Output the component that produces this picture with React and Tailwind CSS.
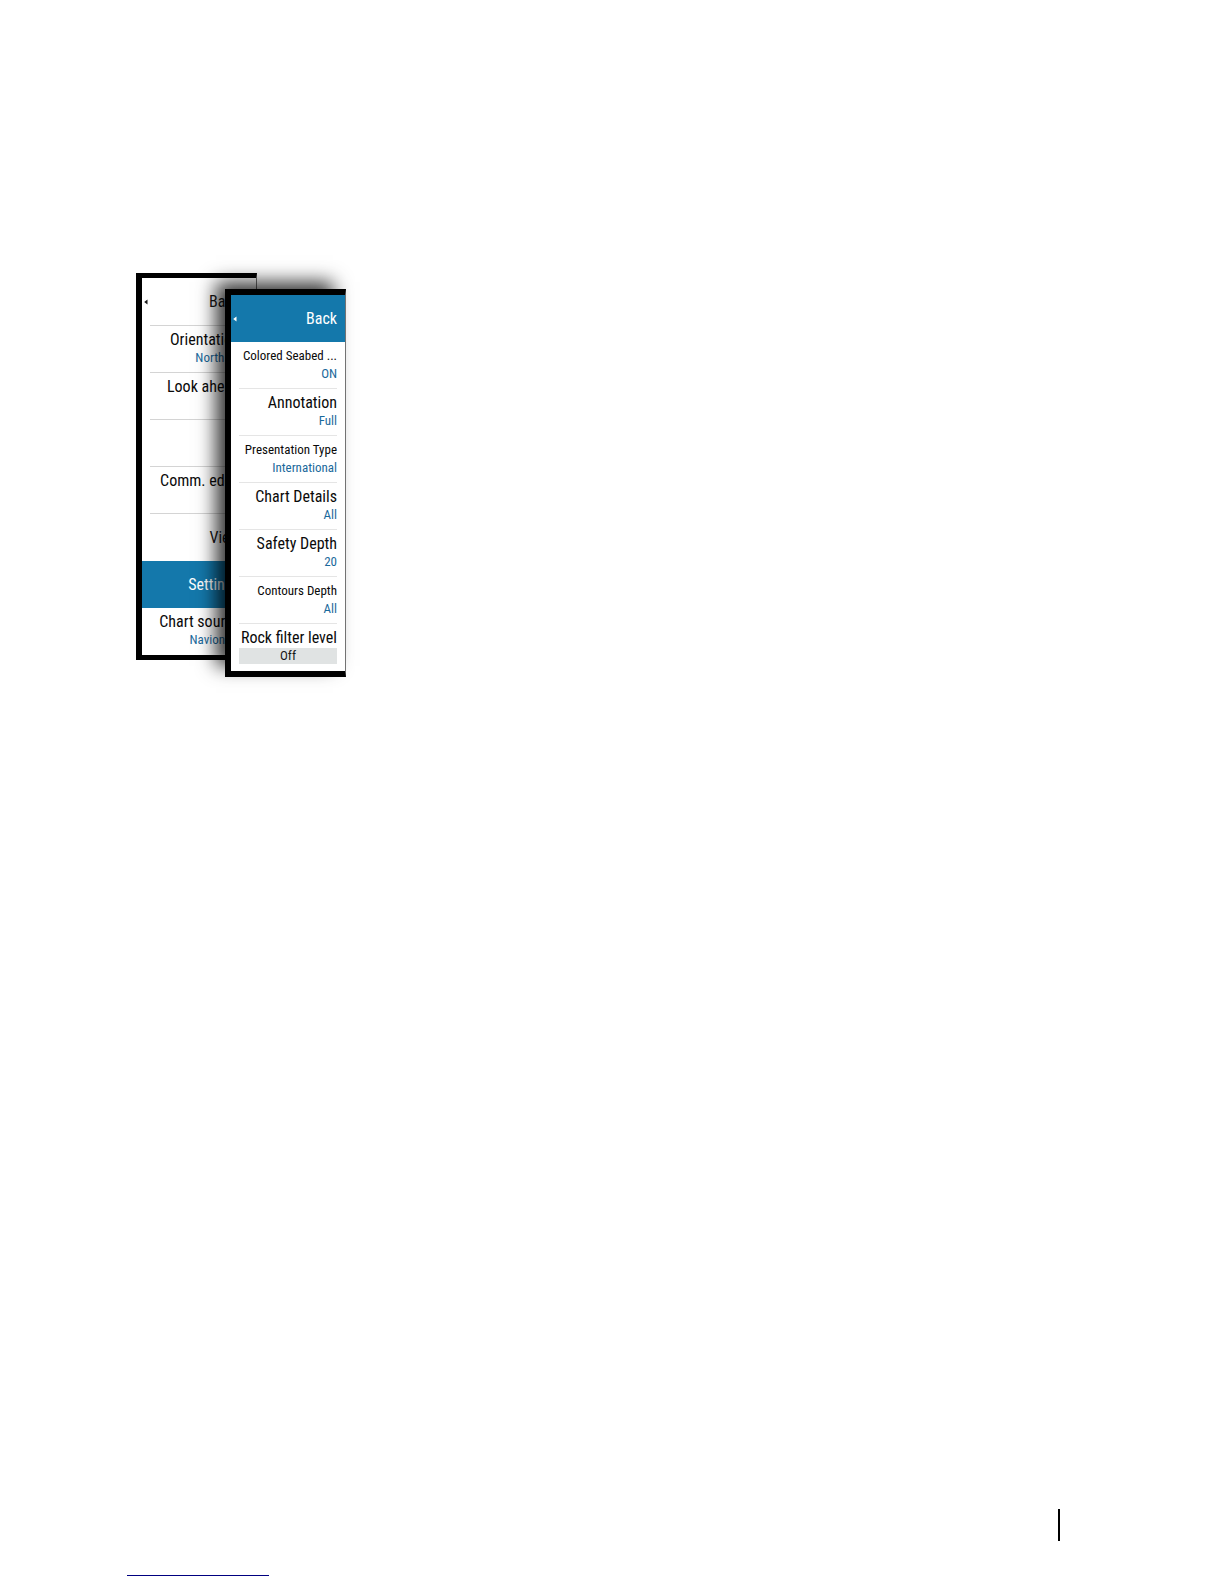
const backItems = [
  { label: 'Orientation', value: 'North up' },
  { label: 'Look ahead', value: '' },
  { label: '3D', narrow: true },
  { label: 'Comm. edge', value: '' },
  { label: 'View' },
  { label: 'Settings', active: true },
  { label: 'Chart source', value: 'Navionics' },
]

const frontItems = [
  { label: 'Colored Seabed ...', value: 'ON', narrow: true },
  { label: 'Annotation', value: 'Full' },
  { label: 'Presentation Type', value: 'International', narrow: true },
  { label: 'Chart Details', value: 'All' },
  { label: 'Safety Depth', value: '20' },
  { label: 'Contours Depth', value: 'All', narrow: true },
  { label: 'Rock filter level', value: 'Off', field: true },
]

function BackButton({ active }) {
  return (
    <button
      type="button"
      className={`flex w-full items-center justify-between pl-0.5 text-base ${
        active ? 'h-[47px] bg-[#1478ab] pr-2 text-white' : 'h-12 pr-4 text-neutral-900'
      }`}
    >
      <svg width="4" height="6" viewBox="0 0 4 6" fill="currentColor" aria-hidden="true">
        <path d="M0.2 3 L3.5 0.6 V5.4 Z" />
      </svg>
      Back
    </button>
  )
}

function MenuItem({ item, inset }) {
  const padding = inset ? 'pr-4' : 'pr-2'
  const size = item.narrow ? 'text-[13px] leading-5' : 'text-base leading-5'

  // Entries without a value line centre their label in the row
  if (item.value === undefined) {
    return (
      <button
        type="button"
        className={`flex h-[47px] w-full items-center justify-end ${size} ${padding} ${
          item.active ? 'bg-[#1478ab] text-white' : 'text-neutral-900'
        }`}
      >
        {item.label}
      </button>
    )
  }

  return (
    <button
      type="button"
      className={`flex h-[47px] w-full flex-col items-end pt-1 text-right ${padding}`}
    >
      <span className={`whitespace-nowrap text-neutral-950 ${size}`}>{item.label}</span>
      {item.field ? (
        <span className="ml-2 self-stretch bg-[#e0e3e3] text-center text-[13px] leading-4 text-neutral-900">
          {item.value}
        </span>
      ) : (
        <span className="whitespace-nowrap text-[13px] leading-4 text-[#1a699b]">
          {item.value}
        </span>
      )}
    </button>
  )
}

function Menu({ items, front, className }) {
  return (
    <nav className={`flex flex-col border-black bg-white ${className}`}>
      <BackButton active={front} />
      <ul>
        {items.map((item, i) => {
          const divided = !item.active && !items[i - 1]?.active && (i > 0 || !front)
          return (
            <li key={item.label} className="relative">
              {divided && (
                <span
                  className={`absolute inset-x-2 -top-px h-px ${
                    front ? 'bg-neutral-200' : 'bg-neutral-300'
                  }`}
                />
              )}
              <MenuItem item={item} inset={!front} />
            </li>
          )
        })}
      </ul>
    </nav>
  )
}

export default function App() {
  return (
    <div className="flex min-h-screen flex-col bg-white font-['Roboto_Condensed','Noto_Sans',sans-serif]">
      <main className="flex flex-1 items-start pl-[136px] pt-[273px]">
        <Menu
          items={backItems}
          className="w-[121px] border-y-[5px] border-l-[6px] border-r border-r-neutral-500"
        />
        <Menu
          items={frontItems}
          front
          className="relative -ml-8 mt-4 w-[121px] border-y-[6px] border-l-[6px] border-r border-r-neutral-500 shadow-[-11px_-9px_18px_-2px_rgba(0,0,0,0.8)]"
        />
      </main>

      <footer className="flex flex-col pb-2">
        <div className="mr-[164px] h-8 w-0.5 self-end bg-black" />
        <a href="#top" aria-label="Top" className="ml-[127px] mt-[34px] h-px w-[142px] bg-[#000080]" />
      </footer>
    </div>
  )
}
